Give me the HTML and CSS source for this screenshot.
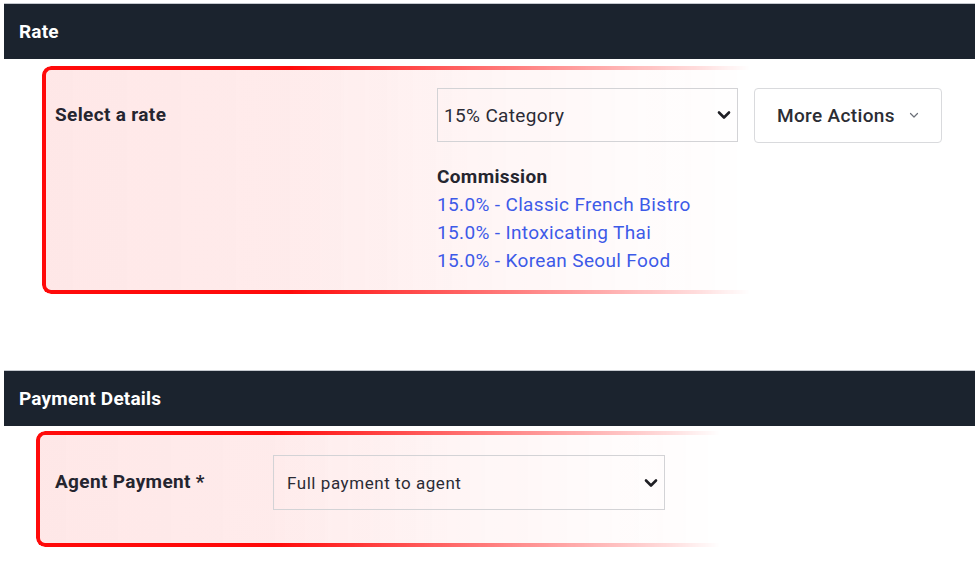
FILE: index.html
```html
<!DOCTYPE html>
<html lang="en">
<head>
<meta charset="utf-8">
<title>Rate</title>
<link rel="stylesheet" href="styles.css">
</head>
<body>
<div class="page">
  <section class="panel">
    <header class="panel-header">Rate</header>
    <div class="panel-body rate-body">
      <div class="highlight highlight-rate"></div>
      <div class="row">
        <div class="label-col">Select a rate</div>
        <div class="field-col">
          <div class="select-wrap rate-select">
            <select class="select"><option>15% Category</option></select>
            <svg class="chev" width="14" height="10" viewBox="0 0 14 10"><path d="M2 2.5 L7 7.5 L12 2.5" fill="none" stroke="#1f1f24" stroke-width="2.6" stroke-linecap="round" stroke-linejoin="round"/></svg>
          </div>
          <div class="commission">
            <div class="commission-title">Commission</div>
            <a class="commission-link" href="#">15.0% - Classic French Bistro</a>
            <a class="commission-link" href="#">15.0% - Intoxicating Thai</a>
            <a class="commission-link" href="#">15.0% - Korean Seoul Food</a>
          </div>
        </div>
        <button class="more-btn" type="button">More Actions
          <svg width="10" height="7" viewBox="0 0 10 7"><path d="M1.5 1.5 L5 5 L8.5 1.5" fill="none" stroke="#6b6f78" stroke-width="1.2" stroke-linecap="round" stroke-linejoin="round"/></svg>
        </button>
      </div>
    </div>
  </section>
  <section class="panel">
    <header class="panel-header">Payment Details</header>
    <div class="panel-body payment-body">
      <div class="highlight highlight-payment"></div>
      <div class="row">
        <div class="label-col label-payment">Agent Payment *</div>
        <div class="select-wrap payment-select">
          <select class="select select-small"><option>Full payment to agent</option></select>
          <svg class="chev" width="14" height="10" viewBox="0 0 14 10"><path d="M2 2.5 L7 7.5 L12 2.5" fill="none" stroke="#1f1f24" stroke-width="2.6" stroke-linecap="round" stroke-linejoin="round"/></svg>
        </div>
      </div>
    </div>
  </section>
</div>
</body>
</html>
```
FILE: styles.css
```css
* { box-sizing: border-box; }
html, body { margin: 0; padding: 0; background: #ffffff; }
body {
  font-family: Roboto, "Noto Sans", "Liberation Sans", sans-serif;
  color: #25252f;
  width: 975px;
  height: 586px;
  overflow: hidden;
  letter-spacing: 0.35px;
}
.page {
  padding: 3px 0 0 4px;
}
.panel-header {
  height: 56px;
  background: #1b232e;
  border-top: 1px solid #c4c8ce;
  color: #ffffff;
  font-weight: 700;
  font-size: 19px;
  letter-spacing: 0.2px;
  display: flex;
  align-items: center;
  padding-left: 15px;
  padding-bottom: 0;
}
.panel-body {
  position: relative;
  margin-left: -4px;
}
.rate-body {
  padding-top: 29px;
  height: 311px;
}
.payment-body {
  padding-top: 29px;
  height: 161px;
}
.highlight {
  position: absolute;
  z-index: 0;
  border: 4px solid #ff0a0a;
  border-right: none;
  border-radius: 9px 0 0 9px;
  background: linear-gradient(to right, rgba(250, 40, 40, 0.11), rgba(250, 40, 40, 0.06));
  -webkit-mask-image: linear-gradient(to right, #000 0%, #000 35%, rgba(0,0,0,0.15) 92%, rgba(0,0,0,0) 100%);
  mask-image: linear-gradient(to right, #000 0%, #000 35%, rgba(0,0,0,0.15) 92%, rgba(0,0,0,0) 100%);
}
.highlight::before {
  content: "";
  position: absolute;
  top: 50%;
  left: -9px;
  width: 6px;
  height: 6px;
  margin-top: -3px;
  background: #ff0a0a;
  transform: rotate(45deg);
  border-radius: 1px;
}
.highlight-rate {
  left: 42px;
  top: 7px;
  width: 708px;
  height: 228px;
}
.highlight-payment {
  left: 36px;
  top: 5px;
  width: 684px;
  height: 116px;
}
.row {
  position: relative;
  z-index: 1;
  display: flex;
  align-items: flex-start;
}
.label-col {
  width: 436px;
  padding-left: 55px;
  font-size: 19px;
  font-weight: 700;
  line-height: 54px;
  color: #25252f;
}
.label-payment {
  width: 273px;
}
.field-col {
  width: 302px;
  padding-left: 1px;
}
.select-wrap {
  position: relative;
}
.rate-select {
  width: 301px;
  height: 54px;
}
.payment-select {
  width: 392px;
  height: 55px;
}
.select {
  -webkit-appearance: none;
  appearance: none;
  width: 100%;
  height: 100%;
  margin: 0;
  border: 1px solid #d3d3d6;
  border-radius: 0;
  background: transparent;
  font-family: Roboto, "Noto Sans", "Liberation Sans", sans-serif;
  font-size: 19px;
  letter-spacing: 0.35px;
  color: #2b2b35;
  padding: 0 30px 0 6px;
}
.select-small {
  font-size: 17px;
  letter-spacing: 0.55px;
  padding-left: 13px;
}
.chev {
  position: absolute;
  right: 7px;
  top: 50%;
  margin-top: -5px;
  pointer-events: none;
}
.commission {
  margin-top: 21px;
  display: flex;
  flex-direction: column;
  font-size: 19px;
  line-height: 28px;
}
.commission-title {
  font-weight: 700;
  color: #25252f;
}
.commission-link {
  color: #3d5ae8;
  text-decoration: none;
}
.more-btn {
  margin-left: 16px;
  width: 188px;
  height: 55px;
  background: #ffffff;
  border: 1px solid #d9dadd;
  border-radius: 4px;
  font-family: Roboto, "Noto Sans", "Liberation Sans", sans-serif;
  font-size: 19px;
  letter-spacing: 0.35px;
  font-weight: 500;
  color: #2b2d33;
  display: flex;
  align-items: center;
  justify-content: flex-start;
  gap: 14px;
  padding: 0 0 0 22px;
}
```
